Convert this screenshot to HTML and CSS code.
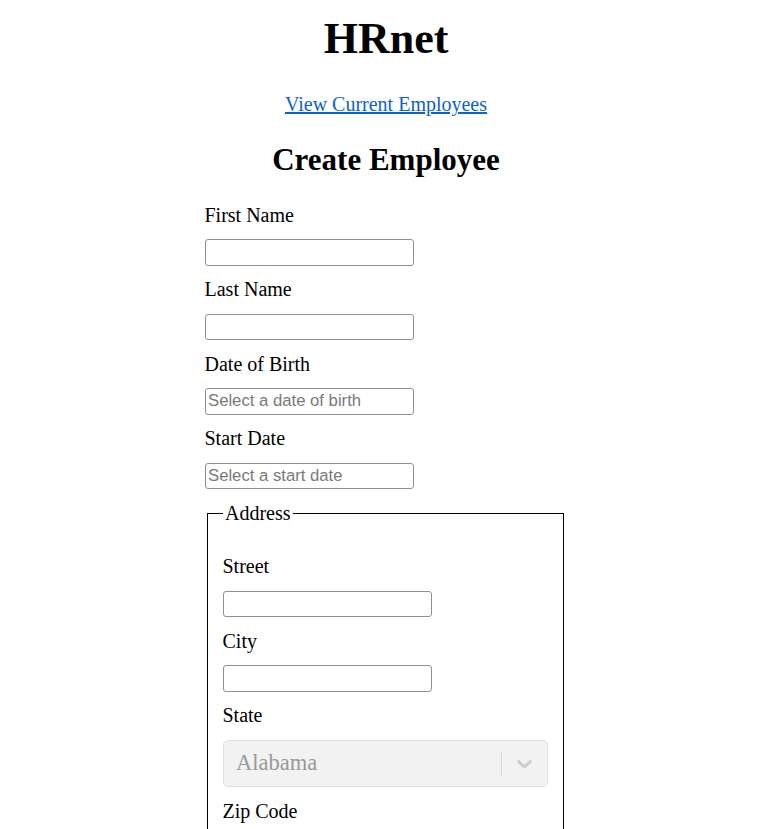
FILE: index.html
```html
<!DOCTYPE html>
<html lang="en">
<head>
<meta charset="utf-8">
<title>HRnet</title>
<link rel="stylesheet" href="styles.css">
</head>
<body>
  <div class="title">
    <h1>HRnet</h1>
  </div>
  <div class="container">
    <a class="nav-link" href="#">View Current Employees</a>
    <h2 class="page-title">Create Employee</h2>
    <form class="employee-form" id="create-employee">
      <label class="field-label" for="first-name">First Name</label>
      <input class="text-input" type="text" id="first-name">

      <label class="field-label" for="last-name">Last Name</label>
      <input class="text-input" type="text" id="last-name">

      <label class="field-label" for="date-of-birth">Date of Birth</label>
      <input class="text-input" type="text" id="date-of-birth" placeholder="Select a date of birth">

      <label class="field-label" for="start-date">Start Date</label>
      <input class="text-input" type="text" id="start-date" placeholder="Select a start date">

      <fieldset class="address">
        <legend class="address-legend">Address</legend>

        <label class="field-label" for="street">Street</label>
        <input class="text-input" id="street" type="text">

        <label class="field-label" for="city">City</label>
        <input class="text-input" id="city" type="text">

        <label class="field-label" for="state">State</label>
        <div class="select-control" id="state">
          <div class="select-value-container">
            <div class="select-single-value">Alabama</div>
          </div>
          <div class="select-indicators">
            <span class="select-separator"></span>
            <div class="select-indicator">
              <svg class="select-chevron" viewBox="0 0 20 20" width="25" height="25" aria-hidden="true">
                <path d="M4.516 7.548c0.436-0.446 1.043-0.481 1.576 0l3.908 3.747 3.908-3.747c0.533-0.481 1.141-0.446 1.574 0 0.436 0.445 0.408 1.197 0 1.615-0.406 0.418-4.695 4.502-4.695 4.502-0.217 0.223-0.502 0.335-0.787 0.335s-0.57-0.112-0.789-0.335c0 0-4.287-4.084-4.695-4.502s-0.436-1.170 0-1.615z"></path>
              </svg>
            </div>
          </div>
        </div>

        <label class="field-label" for="zip-code">Zip Code</label>
        <input class="text-input" id="zip-code" type="number">
      </fieldset>

      <label class="field-label" for="department">Department</label>
      <div class="select-control" id="department">
        <div class="select-value-container">
          <div class="select-single-value">Sales</div>
        </div>
        <div class="select-indicators">
          <span class="select-separator"></span>
          <div class="select-indicator">
            <svg class="select-chevron" viewBox="0 0 20 20" width="25" height="25" aria-hidden="true">
              <path d="M4.516 7.548c0.436-0.446 1.043-0.481 1.576 0l3.908 3.747 3.908-3.747c0.533-0.481 1.141-0.446 1.574 0 0.436 0.445 0.408 1.197 0 1.615-0.406 0.418-4.695 4.502-4.695 4.502-0.217 0.223-0.502 0.335-0.787 0.335s-0.57-0.112-0.789-0.335c0 0-4.287-4.084-4.695-4.502s-0.436-1.170 0-1.615z"></path>
            </svg>
          </div>
        </div>
      </div>
    </form>
    <button class="save-button" type="button">Save</button>
  </div>
</body>
</html>
```
FILE: styles.css
```css
html {
  background: #ffffff;
}

body {
  margin: 0 2px 0 0;
  font-family: "Liberation Serif", "Times New Roman", serif;
  font-size: 20px;
  color: #000000;
}

.title {
  display: flex;
  justify-content: center;
}

.title h1 {
  margin: 13px 0 29px;
  font-size: 44px;
  font-weight: bold;
}

.container {
  display: flex;
  flex-direction: column;
  align-items: center;
}

.nav-link {
  color: #0b63ce;
  text-decoration: underline;
  font-size: 20px;
}

.page-title {
  margin: 26px 0 13.2px;
  font-size: 31px;
  font-weight: bold;
}

.employee-form {
  display: block;
  margin-right: 2px;
}

.field-label {
  display: block;
  margin: 12.5px 0;
  font-size: 20px;
}

.text-input {
  display: block;
  box-sizing: border-box;
  width: 209px;
  height: 26.5px;
  margin: 0;
  padding: 1px 2.5px;
  border: 1px solid #8f8f9d;
  border-radius: 3px;
  background: #ffffff;
  font-family: "Liberation Sans", Arial, sans-serif;
  font-size: 16.7px;
  color: #000000;
}

.text-input::placeholder {
  color: #7a7a7a;
  opacity: 1;
}

.address {
  margin: 12.5px 2px 0;
  padding: 18px 15px 12.5px;
  border: 1px solid #000000;
  min-width: 0;
}

.address-legend {
  padding: 0 2.5px;
  font-size: 20px;
}

.select-control {
  display: flex;
  align-items: center;
  box-sizing: border-box;
  width: 325px;
  min-height: 47.5px;
  border: 1px solid #e0e0e0;
  border-radius: 5px;
  background: #f2f2f2;
}

.select-value-container {
  flex: 1;
  display: flex;
  align-items: center;
  padding: 2.5px 10px;
}

.select-single-value {
  margin: 0 2.5px;
  color: #999999;
  font-size: 22.5px;
}

.select-indicators {
  display: flex;
  align-items: stretch;
  align-self: stretch;
}

.select-separator {
  width: 1px;
  margin: 10px 0;
  background: #d6d6d6;
}

.select-indicator {
  display: flex;
  align-items: center;
  padding: 10px;
}

.select-chevron {
  display: block;
  fill: #cccccc;
}

.save-button {
  margin: 20px 0;
  font-family: "Liberation Serif", "Times New Roman", serif;
  font-size: 16.7px;
}
```
